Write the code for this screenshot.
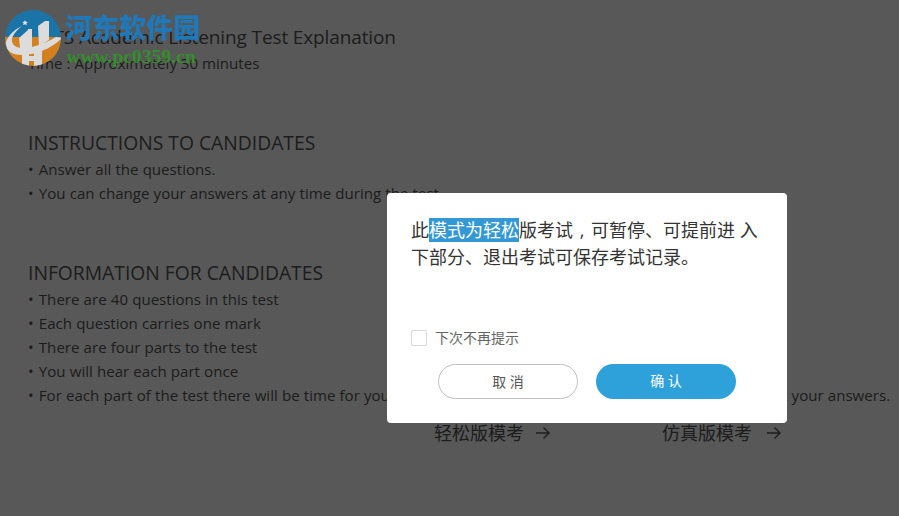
<div class="page">
  <h1>IELTS Academic Listening Test Explanation</h1>
  <p>Time : Approximately 30 minutes</p>

  <section class="first">
    <h2>INSTRUCTIONS TO CANDIDATES</h2>
    <p><span class="b">•</span> Answer all the questions.</p>
    <p><span class="b">•</span> You can change your answers at any time during the test.</p>
  </section>

  <section class="second">
    <h2>INFORMATION FOR CANDIDATES</h2>
    <p><span class="b">•</span> There are 40 questions in this test</p>
    <p><span class="b">•</span> Each question carries one mark</p>
    <p><span class="b">•</span> There are four parts to the test</p>
    <p><span class="b">•</span> You will hear each part once</p>
    <p><span class="b">•</span> For each part of the test there will be time for you to look through the questions and time for you to check your answers.</p>
  </section>

  <div class="modes">
    <span class="mode easy">轻松版模考
      <svg width="16" height="14" viewBox="0 0 16 14"><path d="M1 7h13M8.500 1.500 14 7l-5.500 5.500" fill="none" stroke="currentColor" stroke-width="1.400"/></svg>
    </span>
    <span class="mode real">仿真版模考
      <svg width="16" height="14" viewBox="0 0 16 14"><path d="M1 7h13M8.500 1.500 14 7l-5.500 5.500" fill="none" stroke="currentColor" stroke-width="1.400"/></svg>
    </span>
  </div>
</div>

<div class="overlay">
  <div class="modal">
    <div class="message">此<span class="sel">模式为轻松</span>版考试<span class="comma">{' , '}</span>可暂停、可提前进 入下部分、退出考试可保存考试记录。</div>
    <label class="check"><span class="box"></span><span>下次不再提示</span></label>
    <div class="actions">
      <button class="cancel">取 消</button>
      <button class="ok">确 认</button>
    </div>
  </div>
</div>

<div class="watermark">
  <svg class="logo" width="62" height="62" viewBox="0 0 62 62">
    <defs><clipPath id="c"><circle cx="31" cy="31" r="28"/></clipPath></defs>
    <g clip-path="url(#c)">
      <rect width="62" height="62" fill="#1b74a8"/>
      <path d="M0 30H62V62H0Z" fill="#d4801f"/>
      <path d="M20 19C11 23 5 30 3 38 6 45 11 48 20 48 36 47 48 42 60 31L54 30C44 36 32 41 20 41 11 41 8 34 11 29 13 25 16 22 20 19Z" fill="#dcdcdc"/>
      <path d="M17 31L26 23V22H30V42L18 41Z" fill="#dcdcdc"/>
      <path d="M36 19L43 14H47V33L37 39Z" fill="#dcdcdc"/>
      <path d="M20 47H27V62H20ZM32 44H40V60H32Z" fill="#dcdcdc"/>
      <path d="M26 49H33V54H26Z" fill="#dcdcdc"/>
      <path d="M23 13l.8 1.800 2 .2-1.500 1.300.5 2-1.800-1-1.800 1 .5-2L20.200 15l2-.2Z" fill="#e8e8e8"/>
    </g>
  </svg>
  <span class="wm-name">河东软件园</span>
  <span class="wm-url">www.pc0359.cn</span>
</div>

<style>
  :global(body) {
    margin: 0;
    background: #fff;
    overflow: hidden;
  }
  .page {
    height: 516px;
    box-sizing: border-box;
    padding: 23px 0 0 28px;
    font-family: "Open Sans", "Noto Sans CJK SC", sans-serif;
    color: #555;
    white-space: nowrap;
  }
  h1, h2 {
    margin: 0;
    font-size: 19.3px;
    font-weight: 400;
    line-height: 28px;
  }
  h1 {
    font-size: 19px;
    letter-spacing: -0.12px;
  }
  p {
    margin: 0;
    font-size: 15.1px;
    line-height: 24px;
  }
  section p { word-spacing: 0.2px; }
  .b { margin-right: 1px; }
  .first { margin-top: 54px; }
  .second { margin-top: 54px; }
  .modes {
    display: flex;
    margin: 14px 0 0 406px;
    font-size: 18px;
    line-height: 24px;
  }
  .mode { display: flex; align-items: center; gap: 11px; }
  .mode.easy { width: 228px; }
  .mode.real { gap: 14px; }

  .overlay {
    position: fixed;
    inset: 0;
    background: rgba(0, 0, 0, 0.655);
    display: flex;
    align-items: flex-start;
    padding: 193px 0 0 387px;
    box-sizing: border-box;
    font-family: "Open Sans", "Noto Sans CJK SC", sans-serif;
  }
  .modal {
    width: 400px;
    height: 230px;
    box-sizing: border-box;
    background: #fff;
    border-radius: 4px;
    padding: 24px 24px 0;
  }
  .message {
    font-size: 18px;
    line-height: 27px;
    color: #333;
    height: 111px;
  }
  .sel { background: #3498d4; color: #fff; }
  .comma { word-spacing: 2px; }
  .check {
    display: flex;
    align-items: center;
    gap: 8px;
    font-size: 14px;
    line-height: 20px;
    color: #666;
  }
  .box {
    width: 16px;
    height: 16px;
    box-sizing: border-box;
    border: 1px solid #d9d9d9;
    border-radius: 2px;
  }
  .actions {
    display: flex;
    gap: 18px;
    margin: 16px 0 0 27px;
  }
  button {
    width: 140px;
    height: 35px;
    border-radius: 18px;
    font-family: inherit;
    font-size: 14px;
    line-height: 33px;
    padding: 0 0 2px;
    box-sizing: border-box;
  }
  .cancel { background: #fff; border: 1px solid #bfbfbf; color: #555; }
  .ok { background: #2ea1da; border: 0; color: #fff; }

  .watermark {
    position: fixed;
    left: 0;
    top: 0;
    width: 210px;
    height: 75px;
    pointer-events: none;
  }
  .logo { position: absolute; left: 2px; top: 7px; }
  .wm-name {
    position: absolute;
    left: 65px;
    top: 11px;
    font-family: "Noto Sans CJK SC", sans-serif;
    font-weight: 900;
    font-size: 27px;
    line-height: 32px;
    color: #1f78b8;
    white-space: nowrap;
  }
  .wm-url {
    position: absolute;
    left: 66px;
    top: 47px;
    font-family: "Liberation Serif", serif;
    font-weight: 700;
    font-size: 19.6px;
    line-height: 20px;
    color: #34902a;
    white-space: nowrap;
  }
</style>
